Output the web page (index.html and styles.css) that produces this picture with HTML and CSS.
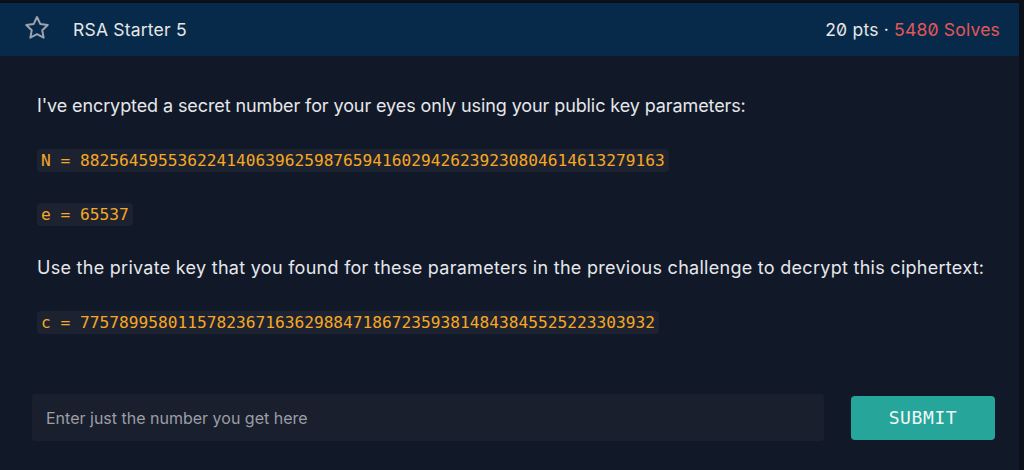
FILE: index.html
```html
<!DOCTYPE html>
<html>
<head>
<meta charset="utf-8">
<link rel="stylesheet" href="styles.css">
</head>
<body>
<div class="card">
  <header class="head">
    <svg class="star" width="28" height="28" viewBox="0 0 24 24" fill="none" stroke="#9ca3af" stroke-width="1.7" stroke-linejoin="round"><path d="M12 2.6l2.8 5.9 6.4.9-4.7 4.5 1.2 6.4L12 17.3l-5.7 3 1.2-6.4-4.7-4.5 6.4-.9z"/></svg>
    <span class="title">RSA Starter 5</span>
    <span class="meta"><span class="pts">20 pts</span> · <span class="solves">5480 Solves</span></span>
  </header>
  <section class="body">
    <p class="line intro">I've encrypted a secret number for your eyes only using your public key parameters:</p>
    <p class="line"><code>N = 882564595536224140639625987659416029426239230804614613279163</code></p>
    <p class="line"><code>e = 65537</code></p>
    <p class="line hint">Use the private key that you found for these parameters in the previous challenge to decrypt this ciphertext:</p>
    <p class="line"><code>c = 77578995801157823671636298847186723593814843845525223303932</code></p>
  </section>
  <form class="submit-row">
    <input class="answer" type="text" placeholder="Enter just the number you get here">
    <button class="btn" type="button">SUBMIT</button>
  </form>
</div>
</body>
</html>
```
FILE: styles.css
```css
html, body {
  margin: 0;
  padding: 0;
  background: #0b0f1a;
  height: 470px;
  overflow: hidden;
}
body {
  padding: 3px 5px 0 0;
  box-sizing: border-box;
  font-family: Inter, "Noto Sans", sans-serif;
}
.card {
  background: #111827;
  height: 467px;
  display: flex;
  flex-direction: column;
}
.head {
  height: 53px;
  background: #072a4b;
  display: flex;
  align-items: center;
  padding: 0 19px 0 23px;
  box-sizing: border-box;
}
.star {
  margin-top: -3px;
}
.title {
  margin-left: 22px;
  font-size: 17.5px;
  letter-spacing: 0.2px;
  color: #e6e6e6;
}
.meta {
  margin-left: auto;
  font-size: 17.5px;
  letter-spacing: 0.2px;
  color: #e6e6e6;
  font-feature-settings: "zero" 1;
}
.solves {
  color: #e25757;
}
.body {
  padding: 38px 0 0 37px;
  display: flex;
  flex-direction: column;
  gap: 30px;
}
.line {
  margin: 0;
  height: 24px;
  line-height: 24px;
  font-size: 18px;
  color: #e5e7eb;
  display: flex;
  align-items: center;
}
.intro {
  letter-spacing: -0.1px;
}
.hint {
  letter-spacing: 0.28px;
}
code {
  font-family: "DejaVu Sans Mono", monospace;
  font-size: 16.2px;
  letter-spacing: 0;
  color: #f6a823;
  background: #1d2231;
  border-radius: 4px;
  padding: 0 4px;
  line-height: 23px;
}
.submit-row {
  margin: 60px 0 0 0;
  padding: 0 24px 0 32px;
  display: flex;
  align-items: center;
  gap: 27px;
}
.answer {
  flex: 1;
  height: 47px;
  box-sizing: border-box;
  background: #1a1f2d;
  border: none;
  border-radius: 3px;
  padding: 0 14px;
  font-family: Inter, "Noto Sans", sans-serif;
  font-size: 16px;
  color: #e5e7eb;
  outline: none;
}
.answer::placeholder {
  color: #9b9ea6;
}
.btn {
  width: 144px;
  height: 44px;
  background: #26a69a;
  border: none;
  border-radius: 4px;
  color: #f2f7f7;
  font-family: "DejaVu Sans Mono", monospace;
  font-size: 18px;
  letter-spacing: 0.6px;
}
```
